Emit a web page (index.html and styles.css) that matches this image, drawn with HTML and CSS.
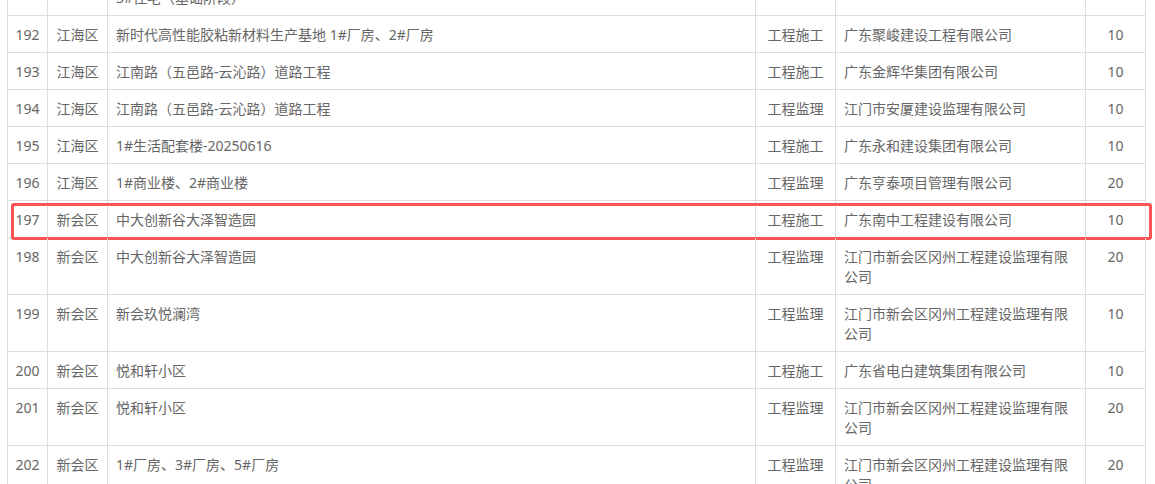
FILE: index.html
```html
<!DOCTYPE html>
<html lang="zh-CN">
<head>
<meta charset="utf-8">
<title>名单</title>
<link rel="stylesheet" href="styles.css">
</head>
<body>
<div class="sheet">
  <div class="row">
    <div class="c num">191</div><div class="c dist">江海区</div>
    <div class="c name">江海区翠湖东侧地块商住项目1#住宅、2#住宅、<br>3#住宅（基础阶段）</div>
    <div class="c type">工程施工</div><div class="c comp">广东建工集团有限公司</div><div class="c score">10</div>
  </div>
  <div class="row">
    <div class="c num">192</div><div class="c dist">江海区</div>
    <div class="c name">新时代高性能胶粘新材料生产基地 1#厂房、2#厂房</div>
    <div class="c type">工程施工</div><div class="c comp">广东聚峻建设工程有限公司</div><div class="c score">10</div>
  </div>
  <div class="row">
    <div class="c num">193</div><div class="c dist">江海区</div>
    <div class="c name">江南路（五邑路-云沁路）道路工程</div>
    <div class="c type">工程施工</div><div class="c comp">广东金辉华集团有限公司</div><div class="c score">10</div>
  </div>
  <div class="row">
    <div class="c num">194</div><div class="c dist">江海区</div>
    <div class="c name">江南路（五邑路-云沁路）道路工程</div>
    <div class="c type">工程监理</div><div class="c comp">江门市安厦建设监理有限公司</div><div class="c score">10</div>
  </div>
  <div class="row">
    <div class="c num">195</div><div class="c dist">江海区</div>
    <div class="c name">1#生活配套楼-20250616</div>
    <div class="c type">工程施工</div><div class="c comp">广东永和建设集团有限公司</div><div class="c score">10</div>
  </div>
  <div class="row">
    <div class="c num">196</div><div class="c dist">江海区</div>
    <div class="c name">1#商业楼、2#商业楼</div>
    <div class="c type">工程监理</div><div class="c comp">广东亨泰项目管理有限公司</div><div class="c score">20</div>
  </div>
  <div class="row is-marked">
    <div class="c num">197</div><div class="c dist">新会区</div>
    <div class="c name">中大创新谷大泽智造园</div>
    <div class="c type">工程施工</div><div class="c comp">广东南中工程建设有限公司</div><div class="c score">10</div>
    <div class="mark"></div>
  </div>
  <div class="row">
    <div class="c num">198</div><div class="c dist">新会区</div>
    <div class="c name">中大创新谷大泽智造园</div>
    <div class="c type">工程监理</div><div class="c comp">江门市新会区冈州工程建设监理有限公司</div><div class="c score">20</div>
  </div>
  <div class="row">
    <div class="c num">199</div><div class="c dist">新会区</div>
    <div class="c name">新会玖悦澜湾</div>
    <div class="c type">工程监理</div><div class="c comp">江门市新会区冈州工程建设监理有限公司</div><div class="c score">10</div>
  </div>
  <div class="row">
    <div class="c num">200</div><div class="c dist">新会区</div>
    <div class="c name">悦和轩小区</div>
    <div class="c type">工程施工</div><div class="c comp">广东省电白建筑集团有限公司</div><div class="c score">10</div>
  </div>
  <div class="row">
    <div class="c num">201</div><div class="c dist">新会区</div>
    <div class="c name">悦和轩小区</div>
    <div class="c type">工程监理</div><div class="c comp">江门市新会区冈州工程建设监理有限公司</div><div class="c score">20</div>
  </div>
  <div class="row">
    <div class="c num">202</div><div class="c dist">新会区</div>
    <div class="c name">1#厂房、3#厂房、5#厂房</div>
    <div class="c type">工程监理</div><div class="c comp">江门市新会区冈州工程建设监理有限公司</div><div class="c score">20</div>
  </div>
</div>
</body>
</html>
```
FILE: styles.css
```css
html, body {
  margin: 0;
  padding: 0;
  background: #fff;
}
body {
  overflow: hidden;
  font-family: "Noto Sans", "Noto Sans CJK SC", sans-serif;
  font-size: 14px;
  line-height: 20px;
  color: #666;
}
.sheet {
  margin: -41px 0 0 7px;
  width: 1139px;
  border-left: 1px solid #ddd;
}
.row {
  position: relative;
  display: grid;
  grid-template-columns: 40px 60px 648px 80px 250px 60px;
}
.c {
  box-sizing: border-box;
  padding: 9px 8px 7px;
  border-right: 1px solid #ddd;
  border-bottom: 1px solid #ddd;
  white-space: normal;
  word-break: break-all;
}
.num, .dist, .type, .score {
  text-align: center;
  padding-left: 0;
  padding-right: 0;
}
.mark {
  position: absolute;
  left: 3px;
  top: 2px;
  width: 1141px;
  height: 37px;
  box-sizing: border-box;
  border: 3px solid #ff5252;
  border-radius: 3px;
  pointer-events: none;
}
```
